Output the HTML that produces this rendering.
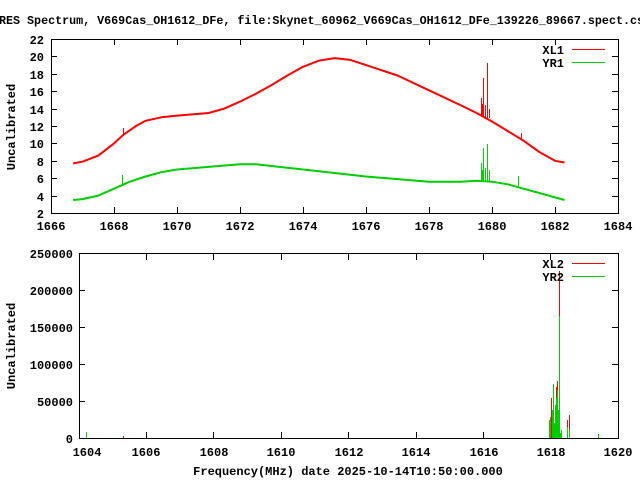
<!DOCTYPE html>
<html><head><meta charset="utf-8"><style>
html,body{margin:0;padding:0;background:#fff;width:640px;height:480px;overflow:hidden}
svg{display:block}
text{font-family:"Liberation Mono","DejaVu Sans Mono",monospace;font-weight:bold;font-size:12px;fill:#000}
.c{shape-rendering:crispEdges}
</style></head><body>
<svg width="640" height="480" viewBox="0 0 640 480" xmlns="http://www.w3.org/2000/svg">
<text x="-1" y="24" textLength="645" lengthAdjust="spacingAndGlyphs">RES Spectrum, V669Cas_OH1612_DFe, file:Skynet_60962_V669Cas_OH1612_DFe_139226_89667.spect.cs</text>
<g class="c">
<rect x="51.5" y="39.5" width="567" height="174" fill="none" stroke="#000" stroke-width="1"/>
<g stroke="#000" stroke-width="1">
<path d="M51 56.5h6M612 56.5h6M51 74.5h6M612 74.5h6M51 91.5h6M612 91.5h6M51 109.5h6M612 109.5h6M51 126.5h6M612 126.5h6M51 143.5h6M612 143.5h6M51 161.5h6M612 161.5h6M51 178.5h6M612 178.5h6M51 196.5h6M612 196.5h6"/>
<path d="M114.5 213v-6M114.5 39v6M177.5 213v-6M177.5 39v6M240.5 213v-6M240.5 39v6M303.5 213v-6M303.5 39v6M366.5 213v-6M366.5 39v6M429.5 213v-6M429.5 39v6M492.5 213v-6M492.5 39v6M555.5 213v-6M555.5 39v6"/>
</g>
</g>
<g text-anchor="end">
<text x="44" y="44">22</text><text x="44" y="61">20</text><text x="44" y="79">18</text><text x="44" y="96">16</text><text x="44" y="114">14</text><text x="44" y="131">12</text><text x="44" y="148">10</text><text x="44" y="166">8</text><text x="44" y="183">6</text><text x="44" y="201">4</text><text x="44" y="218">2</text>
</g>
<g text-anchor="middle">
<text x="51" y="230">1666</text><text x="114" y="230">1668</text><text x="177" y="230">1670</text><text x="240" y="230">1672</text><text x="303" y="230">1674</text><text x="366" y="230">1676</text><text x="429" y="230">1678</text><text x="492" y="230">1680</text><text x="555" y="230">1682</text><text x="618" y="230">1684</text>
</g>
<text transform="translate(15,127) rotate(-90)" text-anchor="middle">Uncalibrated</text>
<polyline fill="none" stroke="#f00" stroke-width="2" stroke-linejoin="round" points="73.1,163.4 82.5,161.7 98.3,155.6 114,143.4 123.5,134.7 136,126 145.5,120.8 161.3,117.3 177,115.6 208.5,113 224.3,108.6 240,101.6 255.8,93.8 271.5,85.1 287.3,75.5 303,66.8 318.8,60.7 334.5,58.1 350.3,59.9 366,65.1 397.5,75.5 429,90.3 460.5,105.1 476.3,112.9 492,121.5 507.8,131.1 523.5,140.7 539.3,152 555,160.8 564.5,162.5"/>
<g class="c" stroke="#f00" stroke-width="1"><path d="M481.5 115V98M482.5 115V104M483.5 117V78M487.5 118V63M489.5 118V109M485.5 117V105M521.5 140V133M123.5 136V128"/></g>
<polyline fill="none" stroke="#0c0" stroke-width="2" stroke-linejoin="round" points="73.1,200 82.5,199.1 98.3,195.6 114,188.7 129.8,181.7 145.5,176.5 161.3,172.2 177,169.5 208.5,166.9 240,164.3 255.8,164.3 271.5,166 303,169.5 334.5,173 366,176.5 397.5,179.1 429,181.7 460.5,181.7 476.3,180.8 492,181.7 507.8,184.3 523.5,188.7 539.3,193 555,197.4 564.5,200"/>
<g class="c" stroke="#0c0" stroke-width="1"><path d="M481.5 181V163M482.5 181V170M483.5 181V148M487.5 181V144M485.5 181V168M489.5 181V170M518.5 186V176M122.5 184V175"/></g>
<text x="564" y="54" text-anchor="end">XL1</text><path class="c" d="M572 49.5h33" stroke="#f00"/>
<text x="564" y="67" text-anchor="end">YR1</text><path class="c" d="M572 62.5h33" stroke="#0c0"/>
<g class="c">
<rect x="79.5" y="253.5" width="539" height="185" fill="none" stroke="#000"/>
<g stroke="#000">
<path d="M79 401.5h6M612 401.5h6M79 364.5h6M612 364.5h6M79 327.5h6M612 327.5h6M79 290.5h6M612 290.5h6"/>
<path d="M146.5 438v-6M146.5 254v6M213.5 438v-6M213.5 254v6M281.5 438v-6M281.5 254v6M348.5 438v-6M348.5 254v6M416.5 438v-6M416.5 254v6M483.5 438v-6M483.5 254v6M550.5 438v-6M550.5 254v6"/>
</g>
</g>
<g text-anchor="end">
<text x="73" y="258">250000</text><text x="73" y="295">200000</text><text x="73" y="332">150000</text><text x="73" y="369">100000</text><text x="73" y="406">50000</text><text x="73" y="443">0</text>
</g>
<g text-anchor="middle">
<text x="87" y="456">1604</text><text x="146" y="456">1606</text><text x="214" y="456">1608</text><text x="281" y="456">1610</text><text x="349" y="456">1612</text><text x="416" y="456">1614</text><text x="484" y="456">1616</text><text x="551" y="456">1618</text><text x="618" y="456">1620</text>
</g>
<text transform="translate(15,346) rotate(-90)" text-anchor="middle">Uncalibrated</text>
<text x="348" y="475" text-anchor="middle">Frequency(MHz) date 2025-10-14T10:50:00.000</text>
<g class="c" stroke="#f00" stroke-width="1"><path d="M551.5 438V398M556.5 438V387M557.5 438V381M559.5 438V271M567.5 438V420M569.5 438V415M598.5 438V434M123.5 438V436"/></g>
<g class="c" stroke="#0c0" stroke-width="1"><path d="M86.5 438V432M549.5 438V420M550.5 438V417M552.5 438V410M553.5 438V384M554.5 438V423M555.5 438V405M556.5 438V398M557.5 438V390M558.5 438V410M559.5 438V316M560.5 438V433M561.5 438V430M567.5 438V427M569.5 438V430M598.5 438V435"/></g>
<text x="564" y="268" text-anchor="end">XL2</text><path class="c" d="M572 263.5h33" stroke="#f00"/>
<text x="564" y="281" text-anchor="end">YR2</text><path class="c" d="M572 276.5h33" stroke="#0c0"/>
</svg>
</body></html>
